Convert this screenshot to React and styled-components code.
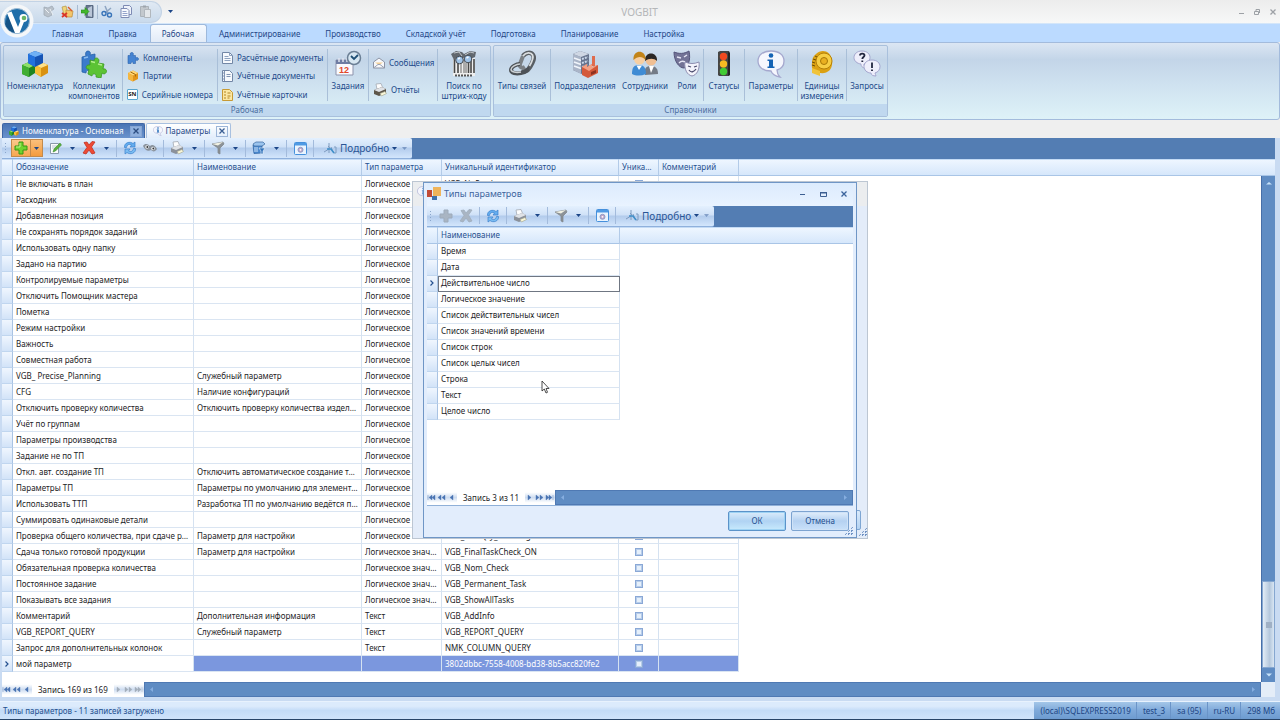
import React, { useState } from 'react';
import styled, { createGlobalStyle, css } from 'styled-components';

const parameters = [
  ['Не включать в план', '', 'Логическое', 'VGB_NoProduct'],
  ['Расходник', '', 'Логическое', ''],
  ['Добавленная позиция', '', 'Логическое', ''],
  ['Не сохранять порядок заданий', '', 'Логическое', ''],
  ['Использовать одну папку', '', 'Логическое', ''],
  ['Задано на партию', '', 'Логическое', ''],
  ['Контролируемые параметры', '', 'Логическое', ''],
  ['Отключить Помощник мастера', '', 'Логическое', ''],
  ['Пометка', '', 'Логическое', ''],
  ['Режим настройки', '', 'Логическое', ''],
  ['Важность', '', 'Логическое', ''],
  ['Совместная работа', '', 'Логическое', ''],
  ['VGB_ Precise_Planning', 'Служебный параметр', 'Логическое', ''],
  ['CFG', 'Наличие конфигураций', 'Логическое', ''],
  ['Отключить проверку количества', 'Отключить проверку количества изделий', 'Логическое', ''],
  ['Учёт по группам', '', 'Логическое', ''],
  ['Параметры производства', '', 'Логическое', ''],
  ['Задание не по ТП', '', 'Логическое', ''],
  ['Откл. авт. создание ТП', 'Отключить автоматическое создание техпроцесса', 'Логическое', ''],
  ['Параметры ТП', 'Параметры по умолчанию для элементов ТП', 'Логическое', ''],
  ['Использовать ТТП', 'Разработка ТП по умолчанию ведётся по ТТП', 'Логическое', ''],
  ['Суммировать одинаковые детали', '', 'Логическое', ''],
  ['Проверка общего количества, при сдаче работ', 'Параметр для настройки', 'Логическое', 'VGB_TaskQty_Planning'],
  ['Сдача только готовой продукции', 'Параметр для настройки', 'Логическое значение', 'VGB_FinalTaskCheck_ON'],
  ['Обязательная проверка количества', '', 'Логическое значение', 'VGB_Nom_Check'],
  ['Постоянное задание', '', 'Логическое значение', 'VGB_Permanent_Task'],
  ['Показывать все задания', '', 'Логическое значение', 'VGB_ShowAllTasks'],
  ['Комментарий', 'Дополнительная информация', 'Текст', 'VGB_AddInfo'],
  ['VGB_REPORT_QUERY', 'Служебный параметр', 'Текст', 'VGB_REPORT_QUERY'],
  ['Запрос для дополнительных колонок', '', 'Текст', 'NMK_COLUMN_QUERY'],
  ['мой параметр', '', '', '3802dbbc-7558-4008-bd38-8b5acc820fe2'],
];

const types = [
  'Время',
  'Дата',
  'Действительное число',
  'Логическое значение',
  'Список действительных чисел',
  'Список значений времени',
  'Список строк',
  'Список целых чисел',
  'Строка',
  'Текст',
  'Целое число',
];

const menu = [
  'Главная', 'Правка', 'Рабочая', 'Администрирование', 'Производство',
  'Складской учёт', 'Подготовка', 'Планирование', 'Настройка',
];

/* ---------- icons ---------- */

const LogoIcon = () => (
  <svg width="34" height="34" viewBox="0 0 34 34">
    <circle cx="17" cy="17" r="16.5" fill="#f5f7f9" />
    <circle cx="17" cy="17" r="12.5" fill="#1f6ea9" stroke="#9dbcd6" strokeWidth="1" />
    <path d="M5 20a12 12 0 0 0 11 9L8 12z" fill="#155386" />
    <path d="M7 9l4.500-1.500L18 23l3.500-9 3 2.500L19.500 29H15z" fill="#fff" />
    <circle cx="23.500" cy="14" r="4" fill="#fff" />
    <circle cx="24" cy="14" r="2.300" fill="#67b567" />
  </svg>
);

const CubesIcon = ({ size = 28 }) => (
  <svg width={size} height={size} viewBox="0 0 28 28">
    <path d="M1 15l7-3 6 3v8l-6 4-7-3z" fill="#1f8420" />
    <path d="M1 15l7-3 6 3-6 3z" fill="#8fe06a" />
    <path d="M1 15l7 3v9l-7-3z" fill="#3fae33" />
    <path d="M14 15l6-3 7 3v8l-7 4-6-4z" fill="#d99110" />
    <path d="M14 15l6-3 7 3-7 3z" fill="#ffe28a" />
    <path d="M14 15l6 3v9l-6-4z" fill="#f7bf3a" />
    <path d="M7 4l7-3 8 3v9l-8 4-7-4z" fill="#1553b4" />
    <path d="M7 4l7-3 8 3-8 3z" fill="#6fb0f5" />
    <path d="M7 4l7 3v10l-7-4z" fill="#2371dc" />
  </svg>
);

const PuzzlesIcon = () => (
  <svg width="28" height="28" viewBox="0 0 28 28">
    <path d="M2 7l4-1c-1-3 0-5 2-5s3 2 2 4l5-1v18l-5 1c1-3-4-4-4 0l-4-1z" fill="#3b7bcb" stroke="#2a62aa" strokeWidth=".8" />
    <path d="M4 8l4-1" stroke="#8dbdf0" strokeWidth="1.500" />
    <path d="M10 10l4 1c0-4 5-4 5 0l-1 2 6 1-1 5c4-1 5 4 1 5l-2-1-1 5-5-1c1-4-4-4-4-1l-4-2 1-5c-3 1-4-3-1-4h2z" fill="#5cc334" stroke="#3b9a1f" strokeWidth=".8" />
    <path d="M11 11.500l4 1M18 14l4 1" stroke="#b4f08c" strokeWidth="1.300" />
  </svg>
);

const PuzzleIcon = () => (
  <svg width="12" height="12" viewBox="0 0 12 12">
    <path d="M1 3.500h2.500C2.500 1 4 .5 5 .5S7 1.500 6 3.500h2.500V6c2-1 3 0 3 1s-1 2-3 1v3.500H6c.5-2-2-2-2 0H1z" fill="#4483d2" stroke="#2b62ab" strokeWidth=".6" />
  </svg>
);

const BoxIcon = () => (
  <svg width="12" height="12" viewBox="0 0 12 12">
    <path d="M1 3l5-2.500L11 3v6l-5 2.500L1 9z" fill="#e2951a" />
    <path d="M1 3l5-2.500L11 3 6 5.500z" fill="#ffd777" />
    <path d="M1 3l5 2.500v6L1 9z" fill="#f4b640" />
    <path d="M3.500 2l5 2.500v2" stroke="#a66a0c" fill="none" />
  </svg>
);

const SerialMark = styled.span`
  width: 12px;
  height: 11px;
  border: 1px solid #58a6d0;
  border-radius: 1px;
  background: #fff;
  color: #222;
  font-size: 6px;
  font-weight: 700;
  line-height: 9px;
  text-align: center;
`;

const PageIcon = ({ kind }) => (
  <svg width="11" height="12" viewBox="0 0 11 12">
    <path d="M.5.5h7l3 3v8H.5z" fill={kind === 'card' ? '#fbe7a2' : '#f6f9fd'} stroke={kind === 'card' ? '#c79a35' : '#7287a6'} />
    {kind === 'doc' && <path d="M7.500.5v3h3M2.500 4.500h4M2.500 6.500h6M2.500 8.500h6" stroke="#8ea2bf" fill="none" />}
    {kind === 'book' && <path d="M2.500 1v10M4.500 4.500h4M4.500 6.500h4M1 3h1M1 6h1M1 9h1" stroke="#8094b3" fill="none" />}
    {kind === 'card' && <path d="M2 3h2M2 6h2M2 9h2M5.500 4h3M5.500 7h3M5.500 9h2" stroke="#b18425" fill="none" />}
  </svg>
);

const TaskIcon = () => (
  <svg width="28" height="28" viewBox="0 0 28 28">
    <path d="M2 10h17v15H2z" fill="#fafafe" stroke="#8d93ac" />
    <path d="M2 10h17v4H2z" fill="#6f7da3" />
    <path d="M5 8v4M9 8v4M13 8v4" stroke="#dfe4f0" strokeWidth="1.500" />
    <text x="5" y="23" fontSize="9" fontWeight="700" fontFamily="Liberation Sans" fill="#e2492b">12</text>
    <circle cx="20" cy="8" r="6.500" fill="#d7e7f2" stroke="#6b7f95" strokeWidth="1.500" />
    <path d="M17 6l3 3 4-4" stroke="#1e4e74" strokeWidth="1.800" fill="none" />
  </svg>
);

const MailIcon = () => (
  <svg width="12" height="12" viewBox="0 0 12 12">
    <path d="M.5 5L6 1l5.500 4v6H.5z" fill="#f7f8fb" stroke="#8c93a4" />
    <path d="M2 5.500h8L6 8z" fill="#f3cf95" />
    <path d="M.5 11L5 7.500h2l4.500 3.500" fill="none" stroke="#9aa1b2" />
  </svg>
);

const PrinterIcon = ({ tone = '#8b919a' }) => (
  <svg width="14" height="14" viewBox="0 0 14 14">
    <path d="M3 1l5-.5 2 5-6 1z" fill="#fdfdfd" stroke="#a3a9b2" strokeWidth=".8" />
    <path d="M1 7l8-3 4 2v4l-7 3-5-2z" fill={tone} />
    <path d="M1 7l8-3 4 2-7 3z" fill="#dfe2e6" />
    <path d="M7 10.500l5-2 1.500 2-5 2.500z" fill="#f9f6d8" stroke="#a3a58d" strokeWidth=".6" />
  </svg>
);

const BarcodeIcon = () => (
  <svg width="28" height="28" viewBox="0 0 28 28">
    <path d="M3 8h22v18H3z" fill="#eeeeee" />
    <path d="M4.500 9v14M8 12v11M18.500 9v14M21 9v14M24 9v14" stroke="#474747" strokeWidth="1.600" />
    <path d="M11 13v10M14 10v13M16 13v10" stroke="#686868" />
    <path d="M1 4l5-3 6 1 2 2 6-3 6 1-1 5-5 2-4-3-5 4-4-2-3 2z" fill="#62686f" />
    <path d="M4 3l5-1 3 4M15 5l5-3 4 1" stroke="#c1c6cb" fill="none" />
    <circle cx="9.500" cy="10" r="3.800" fill="#9fc3e8" stroke="#454b53" />
    <circle cx="18" cy="9" r="3.800" fill="#9fc3e8" stroke="#454b53" />
    <path d="M8 9l2-1M16.500 8l2-1" stroke="#f3f9ff" strokeWidth="1.500" />
    <path d="M5 25.500h18" stroke="#555" strokeDasharray="2 1" strokeWidth="2" />
  </svg>
);

const ChainIcon = () => (
  <svg width="28" height="28" viewBox="0 0 28 28" fill="none">
    <path d="M15 6c3-4 8-4 10-1s0 7-3 12-6 5-8 3" stroke="#595e63" strokeWidth="4.500" />
    <path d="M15 6l-3 8c-1 3 2 5 5 3" stroke="#7b8085" strokeWidth="4" />
    <path d="M15 6c3-4 8-4 9.500-1s0 6-3 11" stroke="#dadddf" strokeWidth="1.800" />
    <path d="M12 14c-4 0-9 3-9 6s5 4 10 3 7-3 6-5" stroke="#4d5257" strokeWidth="4" />
    <path d="M12 14c-4 0-9 3-9 5.500s5 3.500 10 2.500" stroke="#cdd1d4" strokeWidth="1.500" />
  </svg>
);

const BuildingIcon = () => (
  <svg width="28" height="28" viewBox="0 0 28 28">
    <path d="M2 4l7-3 9 3v17l-7 3-9-4z" fill="#66738d" />
    <path d="M2 4l8 3v17l-8-4z" fill="#aab5c8" />
    <path d="M2 4l7-3 9 3-8 3z" fill="#cfd7e4" />
    <path d="M3 8l7 2.500M3 12l7 2.500M3 16l7 2.500" stroke="#f1f5fb" strokeWidth="1.500" />
    <path d="M11 9l6-2M11 13l6-2M11 17l6-2" stroke="#cad8ea" strokeWidth="2" strokeDasharray="2 1" />
    <path d="M21 6h3v10h-3z" fill="#df6c4e" />
    <path d="M11 17l5-3v3l5-3v3l6-2v8l-10 5-6-3z" fill="#d4593a" />
    <path d="M11 17l5-3v3l5-3v3l6-2-9 6z" fill="#f3a184" />
    <path d="M20 22l5-2v3l-5 2z" fill="#8f3220" />
  </svg>
);

const PeopleIcon = () => (
  <svg width="28" height="28" viewBox="0 0 28 28">
    <path d="M14 25c-1-7 1-9 6-9s7 3 7 8z" fill="#747b86" />
    <path d="M18 16l2 7 3-7z" fill="#fff" />
    <circle cx="20" cy="10" r="5.500" fill="#f0bf93" />
    <path d="M14 11c-1-10 13-10 12 0-3-3-8-3-12 0z" fill="#2b2725" />
    <path d="M1 24c0-7 2-9 7-9s7 3 7 9c-5 2-10 2-14 0z" fill="#3f8bd4" />
    <path d="M5.500 15.500L8 20l3-4.500z" fill="#fff" />
    <circle cx="8.500" cy="9" r="5.500" fill="#f7cfa2" />
    <path d="M2.500 10c-1-11 13-11 12 0-3-4-8-4-12 0z" fill="#c28419" />
  </svg>
);

const MasksIcon = () => (
  <svg width="28" height="28" viewBox="0 0 28 28">
    <path d="M1 2c5 2 10 2 15-1 2 9-1 16-5 17C6 18 1 11 1 2z" fill="#737396" stroke="#54547a" />
    <path d="M4 7l4 1M11 7l3-2M6 13c2-2 4-2 6-1" stroke="#e6e6f4" strokeWidth="1.500" fill="none" />
    <path d="M12 12c5 2 9 2 14 0 1 7-2 13-7 14-5-1-8-7-7-14z" fill="#f3f3fb" stroke="#8e8eb1" />
    <path d="M15 16l3 1M21 17l3-1M16 20c2 3 5 2 7-1" stroke="#4a4a6c" strokeWidth="1.300" fill="none" />
  </svg>
);

const LightsIcon = () => (
  <svg width="28" height="28" viewBox="0 0 28 28">
    <path d="M8 2l2-1h9l1 2v22l-2 1H9l-1-1z" fill="#454545" />
    <path d="M18 2l2 1v22l-2 1z" fill="#252525" />
    <circle cx="13.500" cy="6.500" r="3.700" fill="#f24a20" />
    <circle cx="13.500" cy="14" r="3.700" fill="#f7bb22" />
    <circle cx="13.500" cy="21.500" r="3.700" fill="#42cb35" />
  </svg>
);

const InfoIcon = ({ size = 28 }) => (
  <svg width={size} height={size} viewBox="0 0 28 28">
    <path d="M14 1c8 0 13 4 13 10 0 5-3 8-7 9 0 3 1 5 3 7-5-1-8-3-9-6C6 21 1 17 1 11S6 1 14 1z" fill="#f5f6fd" stroke="#a5a8ce" strokeWidth="1.300" />
    <circle cx="14" cy="5.500" r="2.300" fill="#1663b4" />
    <path d="M10.500 9.500H16v7h1.500V18h-7v-1.500H12V11h-1.500z" fill="#1663b4" />
  </svg>
);

const TapeIcon = () => (
  <svg width="28" height="28" viewBox="0 0 28 28">
    <path d="M8 4c5-5 15-4 16 7 1 8-4 13-12 12-6 0-9-4-8-10 0-4 1-7 4-9z" fill="#dba113" />
    <path d="M4 18l8 3v5l-8-3z" fill="#f0c33a" />
    <circle cx="16" cy="11" r="8" fill="#f7ce44" stroke="#b58008" />
    <circle cx="16" cy="11" r="3.500" fill="#e9b021" stroke="#a87807" />
    <path d="M5 9l3 1M4 12l3 1M4 15l3 1M7 6l2 1" stroke="#6e4e04" />
  </svg>
);

const QueryIcon = () => (
  <svg width="28" height="28" viewBox="0 0 28 28">
    <path d="M9 1c5 0 8 3 8 6.500S14 14 11 14c0 2 1 3 2 4-4 0-5-2-5-4-4-.5-7-3-7-6.500S4 1 9 1z" fill="#eeeefb" stroke="#a4a6ce" />
    <path d="M19 10c5 0 8 3 8 6.500S25 22 22 23c0 1 1 2 1 3-3 0-5-1-5-3-4 0-7-3-7-6.500s3-6.500 8-6.500z" fill="#eeeefb" stroke="#a4a6ce" />
    <path d="M7 5.500c0-2.500 4.500-2.500 4.500 0C11.500 7 9.300 7 9.300 9M9.300 10.500v1.500M19 12.500V18M19 19.500V21" stroke="#22263f" strokeWidth="1.800" fill="none" />
  </svg>
);

const SatelliteIcon = () => (
  <svg width="13" height="13" viewBox="0 0 13 13">
    <path d="M2 2l4 1 4-2 2 3-3 2 1 4-4 2-4-2V7z" fill="#b9c1ca" stroke="#a0aab5" strokeWidth=".8" />
    <path d="M3 4l4 4M8 4l3 6" stroke="#edf1f5" />
  </svg>
);

const ImportIcon = () => (
  <svg width="13" height="13" viewBox="0 0 13 13">
    <path d="M1 2l4-1 2 8-4 1z" fill="#f0d67c" stroke="#b39746" strokeWidth=".7" />
    <path d="M5 5l7 1-1 6H5z" fill="#f3c56b" stroke="#bb8b35" strokeWidth=".7" />
    <path d="M1 8l5 4M6 8l-5 4" stroke="#da3427" strokeWidth="1.800" />
    <path d="M7 2l4 4" stroke="#d95d2b" strokeWidth="1.500" />
  </svg>
);

const ExitIcon = () => (
  <svg width="13" height="13" viewBox="0 0 13 13">
    <path d="M5 .5h7v12H5z" fill="#69788f" stroke="#5b6b84" />
    <path d="M7 3l4-2v11l-4-1z" fill="#b9c5d7" />
    <path d="M0 5h4V2.500l4 4-4 4V8H0z" fill="#43b82b" stroke="#25871a" strokeWidth=".6" />
  </svg>
);

const CutIcon = () => (
  <svg width="13" height="13" viewBox="0 0 13 13" fill="none">
    <path d="M4 1l3 7M10 3L4 8" stroke="#8ea5c2" strokeWidth="1.500" />
    <circle cx="3" cy="8.500" r="2" stroke="#3974b9" strokeWidth="1.400" />
    <circle cx="8.500" cy="10" r="2" stroke="#3974b9" strokeWidth="1.400" />
  </svg>
);

const CopyIcon = () => (
  <svg width="13" height="13" viewBox="0 0 13 13">
    <path d="M3.500.5h6l2 2v7h-8z" fill="#eef2fa" stroke="#7e8bb4" />
    <path d="M1 3.500h6l2 2v7H1z" fill="#f8faff" stroke="#7e8bb4" />
    <path d="M2.500 6.500h4M2.500 8.500h5M2.500 10.500h5" stroke="#93a2ca" />
  </svg>
);

const PasteIcon = () => (
  <svg width="13" height="13" viewBox="0 0 13 13">
    <path d="M1.500 1.500h8v10h-8z" fill="#c3c8cd" stroke="#abb2b9" />
    <path d="M4 .5h3v2H4z" fill="#9da4ac" />
    <path d="M5.500 4.500h6v8h-6z" fill="#e4e7ea" stroke="#b1b7bd" />
  </svg>
);

const PlusIcon = ({ off }) => (
  <svg width="14" height="14" viewBox="0 0 14 14">
    <path d="M5 1h4v4h4v4H9v4H5V9H1V5h4z" fill={off ? '#a9b5c3' : '#6ed32f'} stroke={off ? '#9dabbb' : '#369715'} />
    {!off && <path d="M6 2v4H2" stroke="#c0f390" fill="none" />}
  </svg>
);

const EditIcon = () => (
  <svg width="13" height="13" viewBox="0 0 13 13">
    <path d="M1.500 1.500h8v10h-8z" fill="#fafcfd" stroke="#8a99ad" />
    <path d="M3 4h5M3 6h4" stroke="#bcc7d4" />
    <path d="M4 10l1-3 6-6 1.500 2-6 6z" fill="#58b13f" stroke="#347e25" strokeWidth=".5" />
  </svg>
);

const CrossIcon = ({ off }) => (
  <svg width="14" height="14" viewBox="0 0 14 14">
    <path d="M2 1.500l3-.5 2 3 3-3.500 3 .5-3.500 5 3.500 6-3 1-3-4L4 13l-3-1 4-5.500z" fill={off ? '#a9b5c3' : '#ee4a35'} stroke={off ? '#a0adbc' : '#c23222'} strokeWidth=".8" />
  </svg>
);

const RefreshIcon = () => (
  <svg width="14" height="14" viewBox="0 0 14 14">
    <path d="M1.500 6.500C1 1.500 7 0 10 2.500L12 1v5H7l1.500-2C6 2.500 4 4 3.500 6.500z" fill="#64adef" stroke="#3a80cb" strokeWidth=".7" />
    <path d="M12.500 7.500c.5 5-5.500 6.500-8.500 4L2 13V8h5l-1.500 2c2.500 1.500 4.500 0 5-2.500z" fill="#7bbdf3" stroke="#3a80cb" strokeWidth=".7" />
  </svg>
);

const EyesIcon = () => (
  <svg width="14" height="12" viewBox="0 0 14 12">
    <path d="M0 4c2-3 5-2 7 0 2-2 5-1 7 3-2 3-4 3-6 1-3 2-6 0-8-4z" fill="#8a929c" />
    <circle cx="4" cy="5" r="1.800" fill="#e9edf1" />
    <circle cx="10" cy="6.500" r="1.800" fill="#e9edf1" />
    <circle cx="4.300" cy="5" r=".9" fill="#333" />
    <circle cx="10.300" cy="6.500" r=".9" fill="#333" />
  </svg>
);

const FilterIcon = () => (
  <svg width="14" height="14" viewBox="0 0 14 14">
    <path d="M1 3l11-2 1 2-4 4v6l-2-1V7z" fill="#8c9297" stroke="#7c8287" strokeWidth=".7" />
    <path d="M1 3l11-2-5 3.500z" fill="#f1f1e3" />
  </svg>
);

const PackageIcon = () => (
  <svg width="14" height="14" viewBox="0 0 14 14">
    <path d="M1 4h9v8l-8 .5z" fill="#4c8ad0" stroke="#285f9f" strokeWidth=".7" />
    <path d="M1 3l3-2h7l2 2-3 2H2z" fill="#9bc4ee" stroke="#39699e" strokeWidth=".7" />
    <path d="M3 6v5M5 6v5" stroke="#cfe3f8" />
    <path d="M7 7h6l-2 3v3H9v-3z" fill="#3173bb" stroke="#eef5fc" strokeWidth=".6" />
  </svg>
);

const WindowIcon = () => (
  <svg width="13" height="13" viewBox="0 0 13 13">
    <rect x=".5" y=".5" width="12" height="12" rx="1" fill="#eaf4fe" stroke="#4590dc" />
    <path d="M1 1h11v2.500H1z" fill="#4f9ae4" />
    <circle cx="6.500" cy="7.800" r="2.500" fill="#c4a6c6" stroke="#8c9cc8" />
    <circle cx="6.500" cy="7.800" r=".9" fill="#fff" />
  </svg>
);

const DetailsIcon = () => (
  <svg width="13" height="13" viewBox="0 0 13 13" fill="none">
    <path d="M0 10l5-3M5 1v10M4 4l2 2M7 5l2 5M10 5h2v6h-2" stroke="#7f9cc0" />
    <path d="M3 7h4l3 4" stroke="#3f8fc9" strokeWidth="1.600" />
  </svg>
);

const FormsIcon = () => (
  <svg width="14" height="14" viewBox="0 0 14 14">
    <path d="M0 3h5v7H0z" fill="#c14a35" />
    <path d="M6 0h8v9H6z" fill="#efb45b" />
    <path d="M5 9h5v4H5z" fill="#3f72ad" />
  </svg>
);

const Caret = () => (
  <svg width="5" height="3" viewBox="0 0 5 3"><path d="M0 0h5L2.500 3z" fill="#1b4587" /></svg>
);

const CloseIcon = () => (
  <svg width="6" height="6" viewBox="0 0 6 6"><path d="M.5.5l5 5M5.500.5l-5 5" stroke="currentColor" strokeWidth="1.300" /></svg>
);

const RowArrow = () => (
  <RowArrowIcon width="4" height="6" viewBox="0 0 4 6">
    <path d="M.5.5L3 3 .5 5.500" stroke="#24508f" strokeWidth="1.200" fill="none" />
  </RowArrowIcon>
);

const navShapes = {
  first: 'M1 1v5M5 1v5L2 3.500zM8 1v5L5 3.500z',
  prevPage: 'M4 1v5L1 3.500zM8 1v5L5 3.500z',
  prev: 'M6 1v5L3 3.500z',
  next: 'M3 1v5l3-2.500z',
  nextPage: 'M1 1v5l3-2.500zM5 1v5l3-2.500z',
  last: 'M1 1v5l3-2.500zM4 1v5l3-2.500zM8 1v5',
};

const NavIcon = ({ kind }) => (
  <svg width="9" height="7" viewBox="0 0 9 7">
    <path d={navShapes[kind]} fill="currentColor" stroke="currentColor" strokeWidth=".4" />
  </svg>
);

const PointerIcon = () => (
  <svg width="9" height="14" viewBox="0 0 9 14">
    <path d="M1 1v10l2.300-2 1.700 4 1.500-.7L5 8.500h3z" fill="#fff" stroke="#222" strokeWidth=".8" />
  </svg>
);

/* ---------- shared pieces ---------- */

const toolbarItems = {
  main: [
    ['Добавить', PlusIcon, true, true],
    ['Изменить', EditIcon, true],
    ['Удалить', CrossIcon, true],
    null,
    ['Обновить', RefreshIcon],
    ['Просмотр', EyesIcon],
    null,
    ['Печать', PrinterIcon, true],
    null,
    ['Фильтр', FilterIcon, true],
    null,
    ['Выборка', PackageIcon, true],
    null,
    ['Окно', WindowIcon],
    null,
  ],
  dialog: [
    ['Добавить', () => <PlusIcon off />],
    ['Удалить', () => <CrossIcon off />],
    null,
    ['Обновить', RefreshIcon],
    null,
    ['Печать', PrinterIcon, true],
    null,
    ['Фильтр', FilterIcon, true],
    null,
    ['Окно', WindowIcon],
    null,
  ],
};

const Toolbar = ({ items }) => (
  <ToolbarStrip>
    <ToolbarBody>
      <Grip />
      {items.map((item, i) => {
        if (!item) return <ToolSeparator key={i} />;
        const [label, Icon, split, hot] = item;
        return (
          <React.Fragment key={i}>
            <ToolButton aria-label={label} $hot={hot}><Icon /></ToolButton>
            {split && <ToolArrow aria-label={`${label}: меню`} $hot={hot}><Caret /></ToolArrow>}
          </React.Fragment>
        );
      })}
      <DetailsButton>
        <DetailsIcon />
        Подробно
        <Caret />
      </DetailsButton>
      <Overflow><Caret /></Overflow>
    </ToolbarBody>
  </ToolbarStrip>
);

const Navigator = ({ text, atEnd }) => (
  <NavBar>
    <NavGroup>
      <NavButton aria-label="Первая"><NavIcon kind="first" /></NavButton>
      <NavButton aria-label="Предыдущая страница"><NavIcon kind="prevPage" /></NavButton>
      <NavButton aria-label="Предыдущая"><NavIcon kind="prev" /></NavButton>
    </NavGroup>
    <NavText>{text}</NavText>
    <NavGroup $off={atEnd}>
      <NavButton aria-label="Следующая"><NavIcon kind="next" /></NavButton>
      <NavButton aria-label="Следующая страница"><NavIcon kind="nextPage" /></NavButton>
      <NavButton aria-label="Последняя"><NavIcon kind="last" /></NavButton>
    </NavGroup>
    <HScroll>
      <svg width="3" height="5" viewBox="0 0 3 5"><path d="M3 0v5L0 2.500z" fill="#86aee0" /></svg>
      <svg width="3" height="5" viewBox="0 0 3 5"><path d="M0 0v5l3-2.500z" fill="#86aee0" /></svg>
    </HScroll>
  </NavBar>
);

const Big = ({ icon, width, children }) => (
  <BigButton $width={width}>
    {icon}
    <span>{children}</span>
  </BigButton>
);

const TypesDialog = () => (
  <Dialog role="dialog" aria-label="Типы параметров">
    <DialogTitle>
      <FormsIcon />
      <h2>Типы параметров</h2>
      <DialogControl aria-label="Свернуть">
        <svg width="7" height="7" viewBox="0 0 7 7"><path d="M1 3.500h5" stroke="#3d5f92" /></svg>
      </DialogControl>
      <DialogControl aria-label="Развернуть">
        <svg width="7" height="7" viewBox="0 0 7 7"><path d="M.5 1.500h6v4h-6z" stroke="#3d5f92" fill="none" /><path d="M0 1h7v1.500H0z" fill="#3d5f92" /></svg>
      </DialogControl>
      <DialogControl aria-label="Закрыть"><CloseIcon /></DialogControl>
    </DialogTitle>
    <Toolbar items={toolbarItems.dialog} />
    <DialogBody>
      <Table>
        <colgroup>
          <Col $width={11} />
          <Col $width={182} />
          <col />
        </colgroup>
        <thead>
          <tr><HeadCell /><HeadCell>Наименование</HeadCell><HeadCell /></tr>
        </thead>
        <tbody>
          {types.map((name, i) => (
            <tr key={name}>
              <Marker>{i === 2 && <RowArrow />}</Marker>
              <Cell $focused={i === 2}>{name}</Cell>
              <Blank />
            </tr>
          ))}
        </tbody>
      </Table>
    </DialogBody>
    <Navigator text="Запись 3 из 11" />
    <DialogFooter>
      <DialogButton $primary>ОК</DialogButton>
      <DialogButton>Отмена</DialogButton>
      <SizeGrip />
    </DialogFooter>
    <Pointer><PointerIcon /></Pointer>
  </Dialog>
);

const App = () => {
  const [tab, setTab] = useState('Рабочая');

  return (
    <Window>
      <GlobalStyle />

      <TitleBar>
        <QuickAccess>
          <QuickButton aria-label="Связь"><SatelliteIcon /></QuickButton>
          <QuickButton aria-label="Импорт"><ImportIcon /></QuickButton>
          <QuickLine />
          <QuickButton aria-label="Выход"><ExitIcon /></QuickButton>
          <QuickLine />
          <QuickButton aria-label="Вырезать"><CutIcon /></QuickButton>
          <QuickButton aria-label="Копировать"><CopyIcon /></QuickButton>
          <QuickButton aria-label="Вставить"><PasteIcon /></QuickButton>
        </QuickAccess>
        <QuickMore aria-label="Настроить панель"><Caret /></QuickMore>
        <AppTitle>VOGBIT</AppTitle>
        <WindowControls>
          <button aria-label="Свернуть"><svg width="6" height="6" viewBox="0 0 6 6"><path d="M1 4.500h5" stroke="currentColor" /></svg></button>
          <button aria-label="Восстановить"><svg width="6" height="6" viewBox="0 0 6 6"><path d="M.5 2.500h4v3h-4zM2 2V.5h3.500V4" stroke="currentColor" fill="none" /></svg></button>
          <button aria-label="Закрыть"><CloseIcon /></button>
        </WindowControls>
      </TitleBar>
      <Logo aria-label="Меню приложения"><LogoIcon /></Logo>

      <MenuTabs>
        {menu.map(name => (
          <MenuTab key={name} $active={name === tab} onClick={() => setTab(name)}>{name}</MenuTab>
        ))}
      </MenuTabs>

      <Ribbon>
        <Group>
          <GroupItems>
            <Big icon={<CubesIcon />} width={62}>Номенклатура</Big>
            <Big icon={<PuzzlesIcon />} width={56}>Коллекции<br />компонентов</Big>
            <Divider />
            <SmallStack $width={94}>
              <SmallButton><PuzzleIcon />Компоненты</SmallButton>
              <SmallButton><BoxIcon />Партии</SmallButton>
              <SmallButton><SerialMark>SN</SerialMark>Серийные номера</SmallButton>
            </SmallStack>
            <Divider />
            <SmallStack $width={109}>
              <SmallButton><PageIcon kind="doc" />Расчётные документы</SmallButton>
              <SmallButton><PageIcon kind="book" />Учётные документы</SmallButton>
              <SmallButton><PageIcon kind="card" />Учётные карточки</SmallButton>
            </SmallStack>
            <Divider />
            <Big icon={<TaskIcon />} width={40}>Задания</Big>
            <Divider />
            <SmallStack $width={68}>
              <SmallButton><MailIcon />Сообщения</SmallButton>
              <SmallButton><PrinterIcon tone="#5d564a" />Отчёты</SmallButton>
            </SmallStack>
            <Divider />
            <Big icon={<BarcodeIcon />} width={52}>Поиск по<br />штрих-коду</Big>
          </GroupItems>
          <GroupCaption>Рабочая</GroupCaption>
        </Group>
        <Group>
          <GroupItems>
            <Big icon={<ChainIcon />} width={56}>Типы связей</Big>
            <Divider />
            <Big icon={<BuildingIcon />} width={68}>Подразделения</Big>
            <Big icon={<PeopleIcon />} width={52}>Сотрудники</Big>
            <Big icon={<MasksIcon />} width={32}>Роли</Big>
            <Divider />
            <Big icon={<LightsIcon />} width={40}>Статусы</Big>
            <Divider />
            <Big icon={<InfoIcon />} width={52}>Параметры</Big>
            <Divider />
            <Big icon={<TapeIcon />} width={48}>Единицы<br />измерения</Big>
            <Divider />
            <Big icon={<QueryIcon />} width={40}>Запросы</Big>
          </GroupItems>
          <GroupCaption>Справочники</GroupCaption>
        </Group>
      </Ribbon>

      <DocTabs>
        <DocTab>
          <CubesIcon size={10} />
          <span>Номенклатура - Основная</span>
          <TabClose aria-label="Закрыть вкладку"><CloseIcon /></TabClose>
        </DocTab>
        <DocTab $active>
          <InfoIcon size={10} />
          <span>Параметры</span>
          <TabClose aria-label="Закрыть вкладку" $active><CloseIcon /></TabClose>
        </DocTab>
      </DocTabs>

      <Workspace>
        <Toolbar items={toolbarItems.main} />
        <GridArea>
          <TableWrap>
            <Table>
              <colgroup>
                <Col $width={11} />
                <Col $width={181} />
                <Col $width={168} />
                <Col $width={80} />
                <Col $width={177} />
                <Col $width={40} />
                <Col $width={80} />
                <col />
              </colgroup>
              <thead>
                <tr>
                  <HeadCell />
                  <HeadCell>Обозначение</HeadCell>
                  <HeadCell>Наименование</HeadCell>
                  <HeadCell>Тип параметра</HeadCell>
                  <HeadCell>Уникальный идентификатор</HeadCell>
                  <HeadCell>Уникальный</HeadCell>
                  <HeadCell>Комментарий</HeadCell>
                  <HeadCell />
                </tr>
              </thead>
              <tbody>
                {parameters.map(([code, name, type, uid], i) => {
                  const selected = i === parameters.length - 1;
                  return (
                    <tr key={code}>
                      <Marker>{selected && <RowArrow />}</Marker>
                      <Cell>{code}</Cell>
                      <Cell $selected={selected}>{name}</Cell>
                      <Cell $selected={selected}>{type}</Cell>
                      <Cell $selected={selected}>{uid}</Cell>
                      <Cell $selected={selected}><Check aria-label={`Уникальный: ${code}`} /></Cell>
                      <Cell $selected={selected} />
                      <Blank />
                    </tr>
                  );
                })}
              </tbody>
            </Table>
          </TableWrap>
          <VScroll>
            <VScrollCap />
            <VScrollTrack>
              <svg width="6" height="4" viewBox="0 0 8 5"><path d="M0 4.500L4 1l4 3.500z" fill="#c7e2fa" /></svg>
              <VScrollThumb><i /></VScrollThumb>
              <svg width="6" height="4" viewBox="0 0 8 5"><path d="M0 .5h8L4 4.500z" fill="#c7e2fa" /></svg>
            </VScrollTrack>
          </VScroll>
        </GridArea>
        <BottomRow>
          <Navigator text="Запись 169 из 169" atEnd />
        </BottomRow>
      </Workspace>

      <StatusBar>
        <StatusText>Типы параметров - 11 записей загружено</StatusText>
        <StatusCells>
          <span>(local)\SQLEXPRESS2019</span>
          <span>test_3</span>
          <span>sa (95)</span>
          <span>ru-RU</span>
          <span>298 Мб</span>
        </StatusCells>
      </StatusBar>

      <Overlay>
        <BackDialog>
          <BackTitle><InfoIcon size={13} /></BackTitle>
          <BackFooter><BackButton tabIndex={-1} aria-label="Отмена" /><SizeGrip /></BackFooter>
        </BackDialog>
        <TypesDialog />
      </Overlay>
    </Window>
  );
};

/* ---------- styles ---------- */

const GlobalStyle = createGlobalStyle`
  * {
    box-sizing: border-box;
  }
  body {
    margin: 0;
    font-family: 'Noto Sans', 'DejaVu Sans Condensed', sans-serif;
    font-size: 8px;
    line-height: 10px;
    color: #1d1d1f;
    background: #efefef;
  }
  button {
    font: inherit;
    color: inherit;
    background: none;
    border: 0;
    padding: 0;
    white-space: nowrap;
  }
  svg {
    display: block;
    flex: none;
  }
`;

const Window = styled.div`
  position: relative;
  display: flex;
  flex-direction: column;
  min-height: 100vh;
  border-bottom: 1px solid #274468;
  overflow: hidden;
`;

const TitleBar = styled.header`
  display: flex;
  align-items: center;
  height: 24px;
  background: linear-gradient(#ececec, #f7f8f8);
  border-bottom: 1px solid #d4e6f9;
`;

const QuickAccess = styled.div`
  display: flex;
  align-items: center;
  gap: 6px;
  height: 22px;
  width: 162px;
  padding-left: 42px;
  border: 1px solid #c3d3e5;
  border-left: 0;
  border-radius: 0 11px 11px 0;
  background: linear-gradient(#e0e9f3, #c9daec);
`;

const QuickButton = styled.button`
  width: 13px;
  height: 14px;
`;

const QuickLine = styled.span`
  width: 1px;
  height: 14px;
  margin: 0 -3px;
  background: #a7bbd2;
`;

const QuickMore = styled.button`
  padding: 0 6px;
`;

const AppTitle = styled.h1`
  flex: 1;
  margin: 0;
  padding-right: 138px;
  font-size: 10px;
  font-weight: 400;
  line-height: 14px;
  text-align: center;
  color: #b4b6b8;
`;

const WindowControls = styled.div`
  display: flex;
  gap: 10px;
  padding-right: 4px;
  color: #9da1a6;
`;

const Logo = styled.button`
  position: absolute;
  top: 4px;
  left: 0;
`;

const MenuTabs = styled.nav`
  display: flex;
  height: 18px;
  padding-left: 40px;
  background: #bbdaff;
`;

const MenuTab = styled.button`
  padding: 0 12px 0 11px;
  line-height: 18px;
  color: #1f4787;
  border: 1px solid transparent;
  border-bottom: 0;

  ${({ $active }) => $active && css`
    border-color: #9db9dc;
    border-radius: 3px 3px 0 0;
    background: linear-gradient(#f6faff, #e2ebf7);
  `}
`;

const Ribbon = styled.section`
  display: flex;
  gap: 2px;
  height: 78px;
  padding: 2px;
  border: 1px solid #a3bbdc;
  border-radius: 3px;
  background: linear-gradient(#dce6f3, #c3d5e8 22%, #cfe2f0 55%, #def2f8);
`;

const Group = styled.div`
  display: flex;
  flex-direction: column;
  border: 1px solid #a9c0dc;
  border-radius: 2px;
`;

const GroupItems = styled.div`
  display: flex;
  flex: 1;
`;

const GroupCaption = styled.div`
  height: 12px;
  line-height: 12px;
  text-align: center;
  color: #4d6f9f;
  background: #c0d8ef;
`;

const Divider = styled.span`
  width: 1px;
  margin: 3px 0;
  background: #a9bfd8;
`;

const BigButton = styled.button`
  display: flex;
  flex-direction: column;
  align-items: center;
  gap: 3px;
  width: ${({ $width }) => $width}px;
  padding-top: 4px;
  color: #21498a;
`;

const SmallStack = styled.div`
  display: flex;
  flex-direction: column;
  justify-content: space-around;
  width: ${({ $width }) => $width}px;
  padding: 3px 4px 0;
`;

const SmallButton = styled.button`
  display: flex;
  align-items: center;
  gap: 4px;
  height: 14px;
  color: #21498a;
`;

const DocTabs = styled.div`
  display: flex;
  align-items: flex-end;
  gap: 1px;
  height: 18px;
  padding-left: 2px;
  background: #efefef;
`;

const DocTab = styled.div`
  display: flex;
  align-items: center;
  gap: 3px;
  height: 15px;
  padding: 0 2px 0 6px;
  border: 1px solid ${({ $active }) => ($active ? '#a8c0e0' : '#3f66a5')};
  border-bottom: 0;
  border-radius: 2px 2px 0 0;
  color: ${({ $active }) => ($active ? '#1f4787' : '#fff')};
  background: ${({ $active }) => ($active ? 'linear-gradient(#fff, #e2edfb)' : 'linear-gradient(#4a74b4, #6a93cd)')};
`;

const TabClose = styled.button`
  display: flex;
  align-items: center;
  justify-content: center;
  width: 12px;
  height: 11px;
  margin-left: 3px;
  border: 1px solid ${({ $active }) => ($active ? '#9db6d8' : '#86a5d3')};
  color: ${({ $active }) => ($active ? '#3c5f94' : '#2c4d80')};
  background: ${({ $active }) => ($active ? 'transparent' : '#8fb0de')};
`;

const Workspace = styled.main`
  display: flex;
  flex: 1;
  flex-direction: column;
  padding: 0 5px 4px 2px;
  background: #c9dbf2;
`;

const ToolbarStrip = styled.div`
  display: flex;
  height: 21px;
  background: #537db3;
`;

const ToolbarBody = styled.div`
  display: flex;
  align-items: center;
  border-bottom: 1px solid #8fb0dc;
  border-radius: 0 2px 2px 0;
  background: linear-gradient(#e4f0fe, #cfe1f7 45%, #b2cbec 50%, #d3e6fc);
`;

const Grip = styled.span`
  width: 9px;
  height: 12px;
  background: linear-gradient(#8aa5cb 1px, transparent 1px) 3px 1px / 1px 3px repeat-y;
`;

const ToolButton = styled.button`
  display: flex;
  align-items: center;
  justify-content: center;
  width: 20px;
  height: 18px;

  ${({ $hot }) => $hot && css`
    border: 1px solid #c38a4b;
    background: linear-gradient(#fbc98d, #f7a750);
  `}
`;

const ToolArrow = styled.button`
  display: flex;
  align-items: center;
  justify-content: center;
  width: 14px;
  height: 18px;

  ${({ $hot }) => $hot && css`
    width: 12px;
    margin-right: 2px;
    border: 1px solid #c38a4b;
    border-left: 0;
    background: linear-gradient(#fbc07c, #f39b3e);
  `}
`;

const ToolSeparator = styled.span`
  width: 1px;
  height: 17px;
  margin: 0 3px;
  background: #a3bbdc;
`;

const DetailsButton = styled.button`
  display: flex;
  align-items: center;
  gap: 3px;
  width: 79px;
  padding-left: 7px;
  font-size: 10px;
  line-height: 16px;
  color: #2a5596;
`;

const Overflow = styled.span`
  display: flex;
  justify-content: center;
  width: 16px;
  opacity: 0.4;
`;

const GridArea = styled.div`
  display: flex;
  flex: 1;
  background: #fff;
`;

const TableWrap = styled.div`
  flex: 1;
  min-width: 0;
  padding-bottom: 10px;
`;

const Table = styled.table`
  width: 100%;
  table-layout: fixed;
  border-collapse: separate;
  border-spacing: 0;
`;

const Col = styled.col`
  width: ${({ $width }) => $width}px;
`;

const headFill = css`
  background: linear-gradient(#c4dbf5 1px, #eef6ff 1px, #d6e7fb);
  border-bottom: 1px solid #a9c5e6;
`;

const HeadCell = styled.th`
  height: 17px;
  padding: 0 3px;
  overflow: hidden;
  text-overflow: ellipsis;
  white-space: nowrap;
  text-align: left;
  font-weight: 400;
  line-height: 14px;
  color: #27508f;
  border-right: 1px solid #b3cbe8;
  ${headFill}

  &:last-child {
    border-right: 0;
  }
`;

const RowArrowIcon = styled.svg`
  margin: 0 auto;
`;

const Marker = styled.td`
  height: 16px;
  padding: 0;
  border-right: 1px solid #a9c3e3;
  border-bottom: 1px solid #c0d6ef;
  background: linear-gradient(#f0f6fe, #d2e3f8);
`;

const Cell = styled.td`
  height: 16px;
  padding: 0 3px;
  overflow: hidden;
  text-overflow: ellipsis;
  white-space: nowrap;
  line-height: 14px;
  border-right: 1px solid #d5e2f1;
  border-bottom: 1px solid #dae5f2;

  ${({ $selected }) => $selected && css`
    color: #fff;
    background: #7b97de;
  `}

  ${({ $focused }) => $focused && css`
    outline: 1px solid #6f7682;
    outline-offset: -1px;
  `}
`;

const Blank = styled.td`
  padding: 0;
`;

const Check = styled.input.attrs({ type: 'checkbox' })`
  appearance: none;
  display: block;
  width: 8px;
  height: 8px;
  margin: 0 auto;
  border: 1px solid #8aa8d6;
  background: #e6f0fb;
  box-shadow: inset 0 0 0 1px #b7cdea;
`;

const VScroll = styled.div`
  display: flex;
  flex-direction: column;
  width: 14px;
`;

const VScrollCap = styled.div`
  height: 17px;
  ${headFill}
`;

const VScrollTrack = styled.div`
  display: flex;
  flex: 1;
  flex-direction: column;
  align-items: center;
  padding: 5px 0;
  border-left: 1px solid #476fa8;
  background: #5f8cc3;
`;

const VScrollThumb = styled.div`
  display: flex;
  align-items: center;
  justify-content: center;
  width: 100%;
  height: 87px;
  margin: auto 0 5px;
  border: 1px solid #86a7d0;
  background: linear-gradient(90deg, #e2ecf6, #b4c7dc 60%, #d9e6f3);

  i {
    width: 6px;
    height: 6px;
    background: #9fb0c5;
  }
`;

const BottomRow = styled.div`
  padding-right: 14px;
  background: #e4edf8;
`;

const NavBar = styled.div`
  display: flex;
  height: 15px;
  background: #fff;
`;

const NavGroup = styled.div`
  display: flex;
  align-items: center;
  color: ${({ $off }) => ($off ? '#a3aebb' : '#4a73b2')};
  background: linear-gradient(#fff 15%, #cddcf0 50%, #fff 85%);
`;

const NavButton = styled.button`
  width: 10px;
`;

const NavText = styled.span`
  padding: 0 6px;
  line-height: 15px;
  white-space: nowrap;
`;

const HScroll = styled.div`
  display: flex;
  flex: 1;
  justify-content: space-between;
  align-items: center;
  padding: 0 5px;
  border: 1px solid #4f79b3;
  background: #5f8cc3;
`;

const StatusBar = styled.footer`
  display: flex;
  height: 18px;
  line-height: 18px;
  border-top: 1px solid #e8f2fd;
  background: linear-gradient(#dcebfc 25%, #c3dbf7 50%, #cfe3fb);
`;

const StatusText = styled.div`
  flex: 1;
  padding-left: 3px;
  color: #24508f;
`;

const StatusCells = styled.div`
  display: flex;
  align-items: center;
  color: #1d4583;
  background: linear-gradient(#a4c6e8, #7ea9da 50%, #6d9bd0);

  span {
    padding: 0 5px 0 6px;
    border-right: 1px solid #6a94c8;
  }

  span:last-child {
    border-right: 0;
  }
`;

const Overlay = styled.div`
  position: absolute;
  inset: 0;
  display: grid;
  place-items: center;

  > * {
    grid-area: 1 / 1;
  }
`;

const BackDialog = styled.div`
  display: flex;
  flex-direction: column;
  justify-content: space-between;
  width: 456px;
  height: 358px;
  border: 1px solid #bcc6d2;
  background: #e3ecf9;
`;

const BackTitle = styled.div`
  height: 24px;
  padding: 4px;
  background: #ebedef;
`;

const BackFooter = styled.div`
  position: relative;
  display: flex;
  justify-content: flex-end;
  height: 28px;
  padding-right: 6px;
`;

const BackButton = styled.button`
  width: 57px;
  height: 20px;
  border: 1px solid #7ea6d3;
  border-radius: 2px;
  background: linear-gradient(#d9eafb, #b4d3f2);
`;

const Dialog = styled.div`
  position: relative;
  display: flex;
  flex-direction: column;
  width: 434px;
  height: 356px;
  padding: 0 3px 0 3px;
  border: 1px solid #6f96c6;
  background: #e2edfc;
`;

const DialogTitle = styled.div`
  display: flex;
  align-items: center;
  gap: 3px;
  height: 23px;
  color: #3b639c;
  background: linear-gradient(#dcebfd, #e9f3ff);

  h2 {
    flex: 1;
    margin: 0;
    font-size: 9px;
    font-weight: 400;
    line-height: 12px;
  }
`;

const DialogControl = styled.button`
  display: flex;
  align-items: center;
  justify-content: center;
  width: 18px;
  height: 14px;
`;

const DialogBody = styled.div`
  flex: 1;
  background: #fff;
`;

const DialogFooter = styled.div`
  position: relative;
  display: flex;
  gap: 5px;
  justify-content: flex-end;
  padding: 5px 4px 6px 0;
  border-top: 1px solid #8fb0d8;
`;

const DialogButton = styled.button`
  width: 58px;
  height: 20px;
  color: #24508f;
  border: 1px solid ${({ $primary }) => ($primary ? '#5b93c9' : '#7da3d0')};
  border-radius: 2px;
  box-shadow: inset 0 0 0 1px ${({ $primary }) => ($primary ? '#9ed2f3' : '#cfe2f7')};
  background: ${({ $primary }) => ($primary ? 'linear-gradient(#dcecfb, #b0d3f3 50%, #c8eafd)' : 'linear-gradient(#e2eefb, #b5d1f1 50%, #c9e1fa)')};
`;

const SizeGrip = styled.span`
  position: absolute;
  right: 0;
  bottom: 1px;
  width: 9px;
  height: 9px;
  background: conic-gradient(#6f92c4 25%, transparent 0) 0 0 / 3px 3px;
  clip-path: polygon(100% 0, 100% 100%, 0 100%);
`;

const Pointer = styled.span`
  position: absolute;
  left: 117px;
  top: 197px;
`;

export default App;
